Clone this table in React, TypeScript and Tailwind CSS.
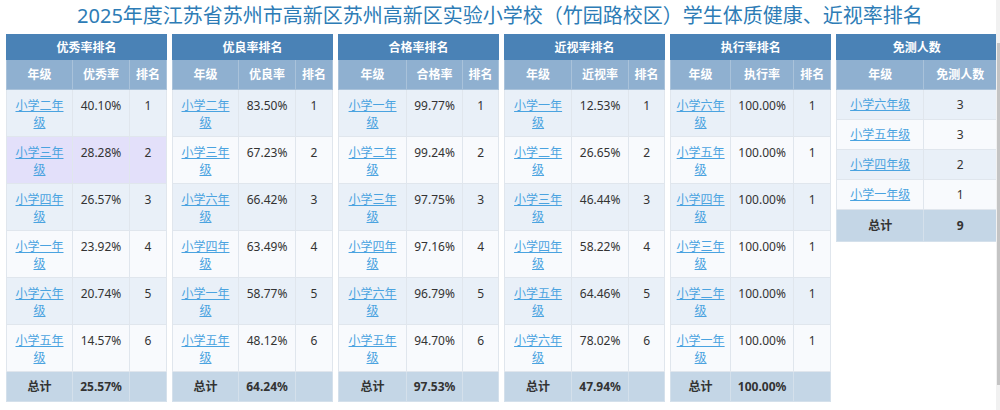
import React from 'react';

interface Row {
  grade: string;
  value: string;
  rank?: number;
}

interface RankTable {
  title: string;
  col: string;
  widths: number[];
  rows: Row[];
  total: string;
  hasRank: boolean;
}

const g = (n: string) => `小学${n}年级`;

const tables: RankTable[] = [
  {
    title: '优秀率排名',
    col: '优秀率',
    widths: [66, 57, 37],
    hasRank: true,
    rows: [
      { grade: g('二'), value: '40.10%', rank: 1 },
      { grade: g('三'), value: '28.28%', rank: 2 },
      { grade: g('四'), value: '26.57%', rank: 3 },
      { grade: g('一'), value: '23.92%', rank: 4 },
      { grade: g('六'), value: '20.74%', rank: 5 },
      { grade: g('五'), value: '14.57%', rank: 6 }
    ],
    total: '25.57%'
  },
  {
    title: '优良率排名',
    col: '优良率',
    widths: [66, 57, 37],
    hasRank: true,
    rows: [
      { grade: g('二'), value: '83.50%', rank: 1 },
      { grade: g('三'), value: '67.23%', rank: 2 },
      { grade: g('六'), value: '66.42%', rank: 3 },
      { grade: g('四'), value: '63.49%', rank: 4 },
      { grade: g('一'), value: '58.77%', rank: 5 },
      { grade: g('五'), value: '48.12%', rank: 6 }
    ],
    total: '64.24%'
  },
  {
    title: '合格率排名',
    col: '合格率',
    widths: [68, 56, 36],
    hasRank: true,
    rows: [
      { grade: g('一'), value: '99.77%', rank: 1 },
      { grade: g('二'), value: '99.24%', rank: 2 },
      { grade: g('三'), value: '97.75%', rank: 3 },
      { grade: g('四'), value: '97.16%', rank: 4 },
      { grade: g('六'), value: '96.79%', rank: 5 },
      { grade: g('五'), value: '94.70%', rank: 6 }
    ],
    total: '97.53%'
  },
  {
    title: '近视率排名',
    col: '近视率',
    widths: [67, 57, 36],
    hasRank: true,
    rows: [
      { grade: g('一'), value: '12.53%', rank: 1 },
      { grade: g('二'), value: '26.65%', rank: 2 },
      { grade: g('三'), value: '46.44%', rank: 3 },
      { grade: g('四'), value: '58.22%', rank: 4 },
      { grade: g('五'), value: '64.46%', rank: 5 },
      { grade: g('六'), value: '78.02%', rank: 6 }
    ],
    total: '47.94%'
  },
  {
    title: '执行率排名',
    col: '执行率',
    widths: [60, 63, 37],
    hasRank: true,
    rows: ['六', '五', '四', '三', '二', '一'].map((n) => ({ grade: g(n), value: '100.00%', rank: 1 })),
    total: '100.00%'
  },
  {
    title: '免测人数',
    col: '免测人数',
    widths: [87, 73],
    hasRank: false,
    rows: [
      { grade: g('六'), value: '3' },
      { grade: g('五'), value: '3' },
      { grade: g('四'), value: '2' },
      { grade: g('一'), value: '1' }
    ],
    total: '9'
  }
];

function Table({ t, highlight }: { t: RankTable; highlight?: number }) {
  const single = !t.hasRank;
  return (
    <table className="w-[160px] table-fixed border-collapse border border-[#dfe4ea] text-[12px] leading-[17px] text-[#333] self-start">
      <colgroup>
        {t.widths.map((w, i) => (
          <col key={i} style={{ width: w }} />
        ))}
      </colgroup>
      <thead>
        <tr className="h-[25px] bg-[#4a82b6] text-white font-bold">
          <th colSpan={t.widths.length} className="border border-[#4a82b6] p-0 text-center align-middle">
            {t.title}
          </th>
        </tr>
        <tr className="h-[30px] bg-[#8fb0d0] text-white font-bold">
          <th className="border border-[#a9c2da] p-0 text-center align-middle">年级</th>
          <th className="border border-[#a9c2da] p-0 text-center align-middle">{t.col}</th>
          {t.hasRank && <th className="border border-[#a9c2da] p-0 text-center align-middle">排名</th>}
        </tr>
      </thead>
      <tbody>
        {t.rows.map((r, i) => {
          const bg =
            highlight === i ? 'bg-[#e3e0fa]' : i % 2 === 0 ? 'bg-[#e9f0f8]' : 'bg-[#f8fafd]';
          const pad = single ? 'h-[30px] py-0 align-middle' : 'h-[47px] pt-[7px] pb-[5px] align-top';
          return (
            <tr key={i} className={bg}>
              <td className={`border border-[#e0e6ed] px-[5px] text-center ${pad}`}>
                <a href="#" className="text-[#4aa3e0] underline">
                  {r.grade}
                </a>
              </td>
              <td className={`border border-[#e0e6ed] px-0 text-center ${pad}`}>{r.value}</td>
              {t.hasRank && <td className={`border border-[#e0e6ed] px-0 text-center ${pad}`}>{r.rank}</td>}
            </tr>
          );
        })}
        <tr className={`${single ? 'h-[32px]' : 'h-[30px]'} bg-[#c4d6e6] font-bold`}>
          <td className="border border-[#d4e0eb] p-0 text-center align-middle">总计</td>
          <td className="border border-[#d4e0eb] p-0 text-center align-middle">{t.total}</td>
          {t.hasRank && <td className="border border-[#d4e0eb] p-0" />}
        </tr>
      </tbody>
    </table>
  );
}

export default function App() {
  return (
    <div
      className="relative w-[1000px] h-[410px] overflow-hidden bg-white"
      style={{ fontFamily: '"Noto Sans", "Noto Sans CJK SC", sans-serif' }}
    >
      <h1 className="h-[34px] pt-[2px] text-center text-[20px] leading-[28px] font-normal text-[#2d7cb6]">
        2025年度江苏省苏州市高新区苏州高新区实验小学校（竹园路校区）学生体质健康、近视率排名
      </h1>
      <div className="flex items-start gap-[5px] pl-[6px]">
        {tables.map((t, i) => (
          <Table key={i} t={t} highlight={i === 0 ? 1 : undefined} />
        ))}
      </div>
      {/* 滚动条 */}
      <div className="absolute right-0 top-0 h-[410px] w-[4px] bg-[#f1f1f1]">
        <div className="mt-[43px] h-[342px] w-[3px] ml-[1px] bg-[#c4c4c4]" />
      </div>
    </div>
  );
}
